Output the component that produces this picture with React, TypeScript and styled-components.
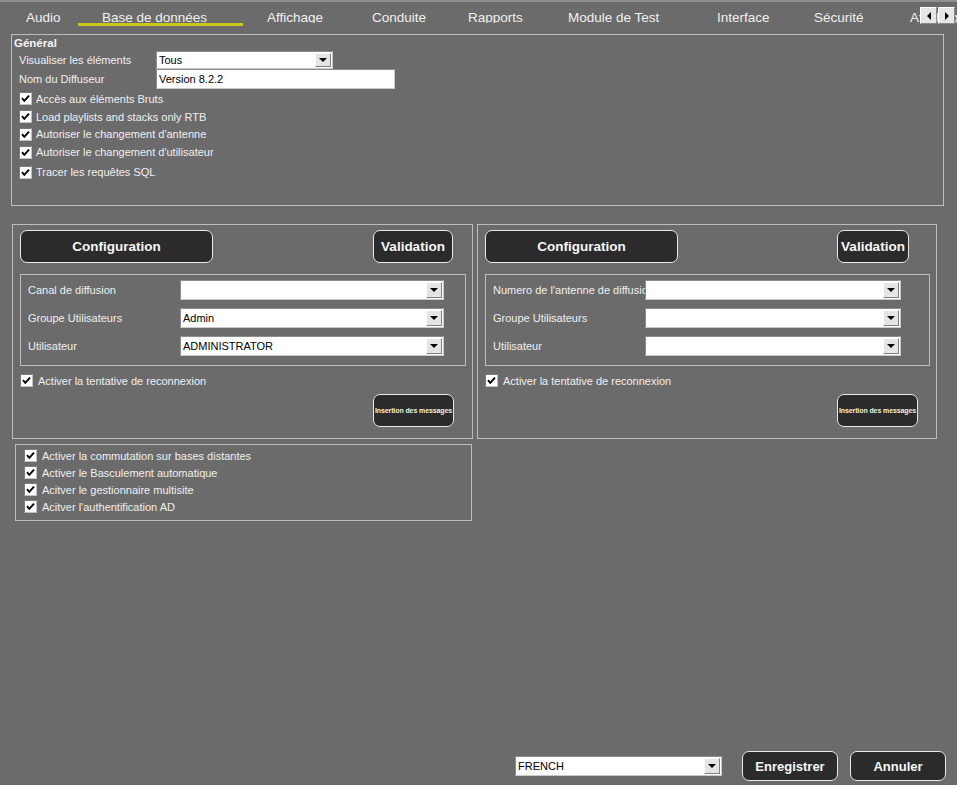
import React from "react";
import styled, { createGlobalStyle } from "styled-components";

const GlobalStyle = createGlobalStyle`
  html, body { margin: 0; padding: 0; background: #6b6b6b; }
  body { font-family: "Liberation Sans", Arial, sans-serif; }
  * { box-sizing: border-box; }
`;

const Page = styled.div`
  position: relative;
  width: 957px;
  height: 785px;
  display: flex;
  flex-direction: column;
  background: #6b6b6b;
  border-top: 2px solid #8f8f8f;
  overflow: hidden;
`;

const TabBar = styled.div`
  display: flex;
  height: 32px;
  padding-left: 2px;
  flex-shrink: 0;
`;

const Tab = styled.div<{ $w: number; $active?: boolean }>`
  width: ${(p) => p.$w}px;
  flex-shrink: 0;
  height: 24px;
  padding: 9px 0 0 24px;
  font-size: 13.5px;
  line-height: 13px;
  color: #f0f0f0;
  white-space: nowrap;
  overflow: hidden;
  border-bottom: 3px solid ${(p) => (p.$active ? "#c8c81c" : "transparent")};
`;

const TabScroll = styled.div`
  position: absolute;
  top: 5px;
  right: 2px;
  display: flex;
  gap: 1px;
`;

const ScrollBtn = styled.div`
  width: 17px;
  height: 17px;
  background: #e6e6e6;
  border: 1px solid;
  border-color: #ffffff #8a8a8a #8a8a8a #ffffff;
  display: flex;
  align-items: center;
  justify-content: center;
`;

const Content = styled.div`
  padding-left: 11px;
  display: flex;
  flex-direction: column;
`;

const GroupBox = styled.div`
  width: 933px;
  height: 172px;
  border: 1px solid #bdbdbd;
  padding: 1px 0 0 2px;
`;

const GroupTitle = styled.div`
  font-size: 11.5px;
  font-weight: bold;
  line-height: 14px;
  color: #f4f4f4;
`;

const FormRow = styled.div<{ $h: number; $mt?: number }>`
  display: flex;
  align-items: center;
  height: ${(p) => p.$h}px;
  margin-top: ${(p) => p.$mt ?? 0}px;
  padding-left: 5px;
`;

const Label = styled.div<{ $w: number }>`
  width: ${(p) => p.$w}px;
  flex-shrink: 0;
  font-size: 11px;
  color: #f0f0f0;
  white-space: nowrap;
  overflow: hidden;
`;

const SelectBox = styled.div<{ $w: number; $h: number }>`
  width: ${(p) => p.$w}px;
  height: ${(p) => p.$h}px;
  flex-shrink: 0;
  display: flex;
  align-items: center;
  background: #ffffff;
  border: 1px solid;
  border-color: #8c8c8c #c8c8c8 #c8c8c8 #8c8c8c;
  padding-left: 2px;
`;

const SelectValue = styled.div`
  flex: 1;
  font-size: 11px;
  color: #000;
  white-space: nowrap;
  overflow: hidden;
`;

const DropBtn = styled.div<{ $h: number }>`
  width: 16px;
  height: ${(p) => p.$h}px;
  margin-right: 1px;
  background: #e4e4e4;
  border: 1px solid;
  border-color: #ffffff #808080 #808080 #ffffff;
  display: flex;
  align-items: center;
  justify-content: center;
`;

const DownTri = styled.div`
  width: 0;
  height: 0;
  border-left: 4px solid transparent;
  border-right: 4px solid transparent;
  border-top: 4px solid #000;
`;

const TextInput = styled.div<{ $w: number }>`
  width: ${(p) => p.$w}px;
  height: 20px;
  background: #ffffff;
  border: 1px solid;
  border-color: #8c8c8c #c8c8c8 #c8c8c8 #8c8c8c;
  padding-left: 2px;
  font-size: 11px;
  line-height: 18px;
  color: #000;
`;

const CheckList = styled.div<{ $mt: number }>`
  display: flex;
  flex-direction: column;
  margin-top: ${(p) => p.$mt}px;
`;

const CheckRow = styled.div<{ $h: number; $pl: number; $gap: number; $mt?: number }>`
  display: flex;
  align-items: center;
  height: ${(p) => p.$h}px;
  padding-left: ${(p) => p.$pl}px;
  gap: ${(p) => p.$gap}px;
  margin-top: ${(p) => p.$mt ?? 0}px;
  font-size: 11px;
  color: #f0f0f0;
  white-space: nowrap;
`;

const CheckBoxFrame = styled.div`
  width: 13px;
  height: 13px;
  flex-shrink: 0;
  background: #ffffff;
  border: 1px solid;
  border-color: #7a7a7a #c0c0c0 #c0c0c0 #7a7a7a;
  display: flex;
  align-items: center;
  justify-content: center;
`;

const PanelsRow = styled.div`
  display: flex;
  gap: 4px;
  margin-top: 18px;
  margin-left: 1px;
`;

const Panel = styled.div<{ $w: number }>`
  width: ${(p) => p.$w}px;
  height: 215px;
  border: 1px solid #bdbdbd;
  padding: 5px 6px 0 7px;
  display: flex;
  flex-direction: column;
`;

const ButtonRow = styled.div<{ $pr: number }>`
  display: flex;
  justify-content: space-between;
  padding-right: ${(p) => p.$pr}px;
`;

const DarkButton = styled.div<{ $w: number; $h: number; $fs?: number }>`
  width: ${(p) => p.$w}px;
  height: ${(p) => p.$h}px;
  flex-shrink: 0;
  background: #2b2b2b;
  border: 1px solid #e8e8e8;
  border-radius: 7px;
  display: flex;
  align-items: center;
  justify-content: center;
  font-weight: bold;
  font-size: ${(p) => p.$fs ?? 13.5}px;
  color: #f6f6f6;
  white-space: nowrap;
  overflow: hidden;
`;

const InnerBox = styled.div`
  margin-top: 11px;
  border: 1px solid #bdbdbd;
  padding: 5px 0 9px 7px;
  display: flex;
  flex-direction: column;
  gap: 8px;
`;

const PanelRow = styled.div`
  display: flex;
  align-items: center;
  height: 20px;
`;

const InsertButton = styled(DarkButton)`
  align-self: flex-end;
  margin-right: 12px;
  margin-top: 7px;
  color: #f4f0dc;
  letter-spacing: -0.1px;
`;

const BottomBox = styled.div`
  width: 457px;
  height: 77px;
  margin: 5px 0 0 4px;
  border: 1px solid #bdbdbd;
  padding-top: 2px;
`;

const Footer = styled.div`
  margin-top: auto;
  margin-bottom: 4px;
  height: 30px;
  display: flex;
  align-items: center;
  justify-content: flex-end;
  padding-right: 11px;
  gap: 12px;
`;

const FooterSelect = styled.div`
  margin-right: 8px;
`;

const Check = () => (
  <CheckBoxFrame>
    <svg width="9" height="9" viewBox="0 0 9 9">
      <polyline points="1,4.2 3.3,6.8 8,1.6" fill="none" stroke="#000" strokeWidth="1.9" />
    </svg>
  </CheckBoxFrame>
);

const Select = ({ w, h, value }: { w: number; h: number; value?: string }) => (
  <SelectBox $w={w} $h={h}>
    <SelectValue>{value ?? ""}</SelectValue>
    <DropBtn $h={h - 4}>
      <DownTri />
    </DropBtn>
  </SelectBox>
);

const tabs: { label: string; w: number; active?: boolean }[] = [
  { label: "Audio", w: 76 },
  { label: "Base de données", w: 165, active: true },
  { label: "Affichage", w: 105 },
  { label: "Conduite", w: 96 },
  { label: "Rapports", w: 100 },
  { label: "Module de Test", w: 149 },
  { label: "Interface", w: 97 },
  { label: "Sécurité", w: 96 },
  { label: "Affichage avancé", w: 120 },
];

const generalChecks = [
  "Accès aux éléments Bruts",
  "Load playlists and stacks only RTB",
  "Autoriser le changement d'antenne",
  "Autoriser le changement d'utilisateur",
];

const bottomChecks = [
  "Activer la commutation sur bases distantes",
  "Activer le Basculement automatique",
  "Acitver le gestionnaire multisite",
  "Acitver l'authentification AD",
];

type PanelProps = {
  w: number;
  validW: number;
  validPad: number;
  selectW: number;
  rows: { label: string; value?: string }[];
};

const ConfigPanel = ({ w, validW, validPad, selectW, rows }: PanelProps) => (
  <Panel $w={w}>
    <ButtonRow $pr={validPad}>
      <DarkButton $w={193} $h={33}>Configuration</DarkButton>
      <DarkButton $w={validW} $h={33}>Validation</DarkButton>
    </ButtonRow>
    <InnerBox>
      {rows.map((r) => (
        <PanelRow key={r.label}>
          <Label $w={152}>{r.label}</Label>
          <Select w={selectW} h={20} value={r.value} />
        </PanelRow>
      ))}
    </InnerBox>
    <CheckRow $h={13} $pl={0} $gap={5} $mt={8}>
      <Check />
      Activer la tentative de reconnexion
    </CheckRow>
    <InsertButton $w={81} $h={33} $fs={7}>Insertion des messages</InsertButton>
  </Panel>
);

export default function App() {
  return (
    <>
      <GlobalStyle />
      <Page>
        <TabBar>
          {tabs.map((t) => (
            <Tab key={t.label} $w={t.w} $active={t.active}>
              {t.label}
            </Tab>
          ))}
        </TabBar>
        <TabScroll>
          <ScrollBtn>
            <svg width="6" height="8" viewBox="0 0 6 8">
              <polygon points="5,0 5,8 1,4" fill="#000" />
            </svg>
          </ScrollBtn>
          <ScrollBtn>
            <svg width="6" height="8" viewBox="0 0 6 8">
              <polygon points="1,0 1,8 5,4" fill="#000" />
            </svg>
          </ScrollBtn>
        </TabScroll>

        <Content>
          <GroupBox>
            <GroupTitle>Général</GroupTitle>
            <FormRow $h={18} $mt={1}>
              <Label $w={137}>Visualiser les éléments</Label>
              <Select w={177} h={18} value="Tous" />
            </FormRow>
            <FormRow $h={20}>
              <Label $w={137}>Nom du Diffuseur</Label>
              <TextInput $w={239}>Version 8.2.2</TextInput>
            </FormRow>
            <CheckList $mt={1}>
              {generalChecks.map((c) => (
                <CheckRow key={c} $h={17.8} $pl={5} $gap={4}>
                  <Check />
                  {c}
                </CheckRow>
              ))}
              <CheckRow $h={17.8} $pl={5} $gap={4} $mt={2}>
                <Check />
                Tracer les requêtes SQL
              </CheckRow>
            </CheckList>
          </GroupBox>

          <PanelsRow>
            <ConfigPanel
              w={461}
              validW={80}
              validPad={13}
              selectW={264}
              rows={[
                { label: "Canal de diffusion" },
                { label: "Groupe Utilisateurs", value: "Admin" },
                { label: "Utilisateur", value: "ADMINISTRATOR" },
              ]}
            />
            <ConfigPanel
              w={460}
              validW={72}
              validPad={21}
              selectW={256}
              rows={[
                { label: "Numero de l'antenne de diffusion" },
                { label: "Groupe Utilisateurs" },
                { label: "Utilisateur" },
              ]}
            />
          </PanelsRow>

          <BottomBox>
            {bottomChecks.map((c) => (
              <CheckRow key={c} $h={17} $pl={8} $gap={5}>
                <Check />
                {c}
              </CheckRow>
            ))}
          </BottomBox>
        </Content>

        <Footer>
          <FooterSelect>
            <Select w={207} h={20} value="FRENCH" />
          </FooterSelect>
          <DarkButton $w={96} $h={30} $fs={13}>Enregistrer</DarkButton>
          <DarkButton $w={96} $h={30} $fs={13}>Annuler</DarkButton>
        </Footer>
      </Page>
    </>
  );
}
